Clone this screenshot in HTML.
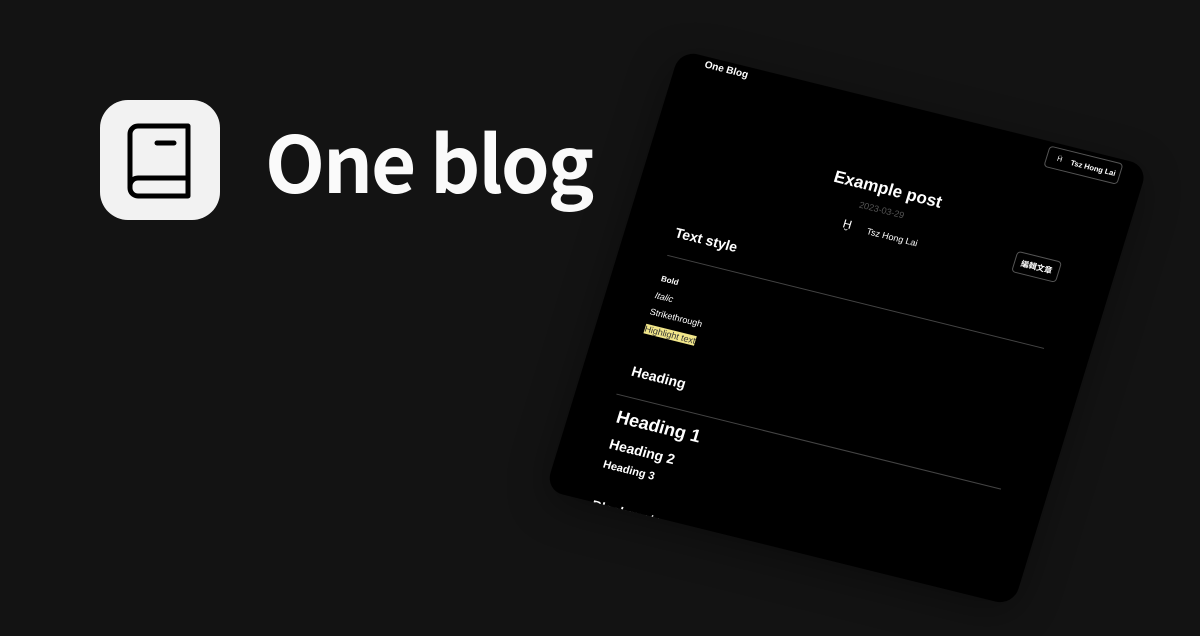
<!DOCTYPE html>
<html><head><meta charset="utf-8"><style>
html,body{margin:0;padding:0}
body{width:1200px;height:636px;background:#131313;position:relative;overflow:hidden;font-family:"Liberation Sans","Noto Sans CJK TC",sans-serif}
.icon{position:absolute;left:100px;top:100px;width:120px;height:120px;border-radius:28px;background:#f2f2f2}
.title{position:absolute;left:265px;top:121px;font-family:"Noto Sans CJK JP",sans-serif;font-size:78px;font-weight:bold;color:#fafafa;letter-spacing:-2px;line-height:78px;white-space:nowrap}
.card{position:absolute;left:0;top:0;width:482px;height:460px;background:#000;border-radius:18px;transform-origin:0 0;transform:matrix(0.971,0.240,-0.293,0.957,680,50);overflow:hidden;box-shadow:0 10px 40px rgba(0,0,0,0.35);color:#fff}
.card div{position:absolute;white-space:nowrap}
.b{font-weight:bold}
.hr{height:1px;background:#444}
.btn{border:1px solid #555;border-radius:4px;font-size:8px;font-weight:bold;box-sizing:border-box;display:flex;align-items:center}
</style></head><body>
<div class="icon">
<svg width="120" height="120" viewBox="0 0 120 120">
<path d="M38 26 H88 V96 H38 A8 8 0 0 1 30 88 V34 A8 8 0 0 1 38 26 Z" fill="none" stroke="#000" stroke-width="5" stroke-linejoin="round"/>
<path d="M30 86 A8 8 0 0 1 38 78 H88" fill="none" stroke="#000" stroke-width="5"/>
<path d="M57 43 H74" stroke="#000" stroke-width="5" stroke-linecap="round"/>
</svg>
</div>
<div class="title">One blog</div>
<div class="card">
<div class="b" style="left:28px;top:3px;font-size:10px">One Blog</div>
<div class="btn" style="left:382px;top:4px;width:76px;height:22px;padding-left:10px;font-weight:normal">
<span style="font-size:7px;margin-right:9px">Ḧ</span><span style="font-weight:bold;font-size:7.5px">Tsz Hong Lai</span></div>
<div class="b" style="left:0;width:480px;text-align:center;top:76px;font-size:17px">Example post</div>
<div style="left:0;width:480px;text-align:center;top:102px;font-size:9px;color:#555">2023-03-29</div>
<div style="left:207px;top:122px;font-size:12px">Ḫ</div>
<div style="left:232px;top:126px;font-size:9px">Tsz Hong Lai</div>
<div class="b" style="left:49px;top:170px;font-size:14px">Text style</div>
<div class="btn" style="left:382px;top:114px;width:46px;height:22px;justify-content:center">編輯文章</div>
<div class="hr" style="left:48px;top:202px;width:388px"></div>
<div class="b" style="left:49px;top:222px;font-size:8px">Bold</div>
<div style="left:48px;top:239px;font-size:9px;font-style:italic">Italic</div>
<div style="left:48px;top:256px;font-size:9px">Strikethrough</div>
<div style="left:48px;top:274px;font-size:9px;background:#f1e68a;color:#333">Highlight text</div>
<div class="b" style="left:48px;top:315px;font-size:14px">Heading</div>
<div class="hr" style="left:40px;top:349px;width:396px"></div>
<div class="b" style="left:47px;top:361px;font-size:18px">Heading 1</div>
<div class="b" style="left:48px;top:391px;font-size:14px">Heading 2</div>
<div class="b" style="left:48px;top:415px;font-size:11px">Heading 3</div>
<div class="b" style="left:49px;top:455px;font-size:13px">Blockquote</div>
</div>
</body></html>
